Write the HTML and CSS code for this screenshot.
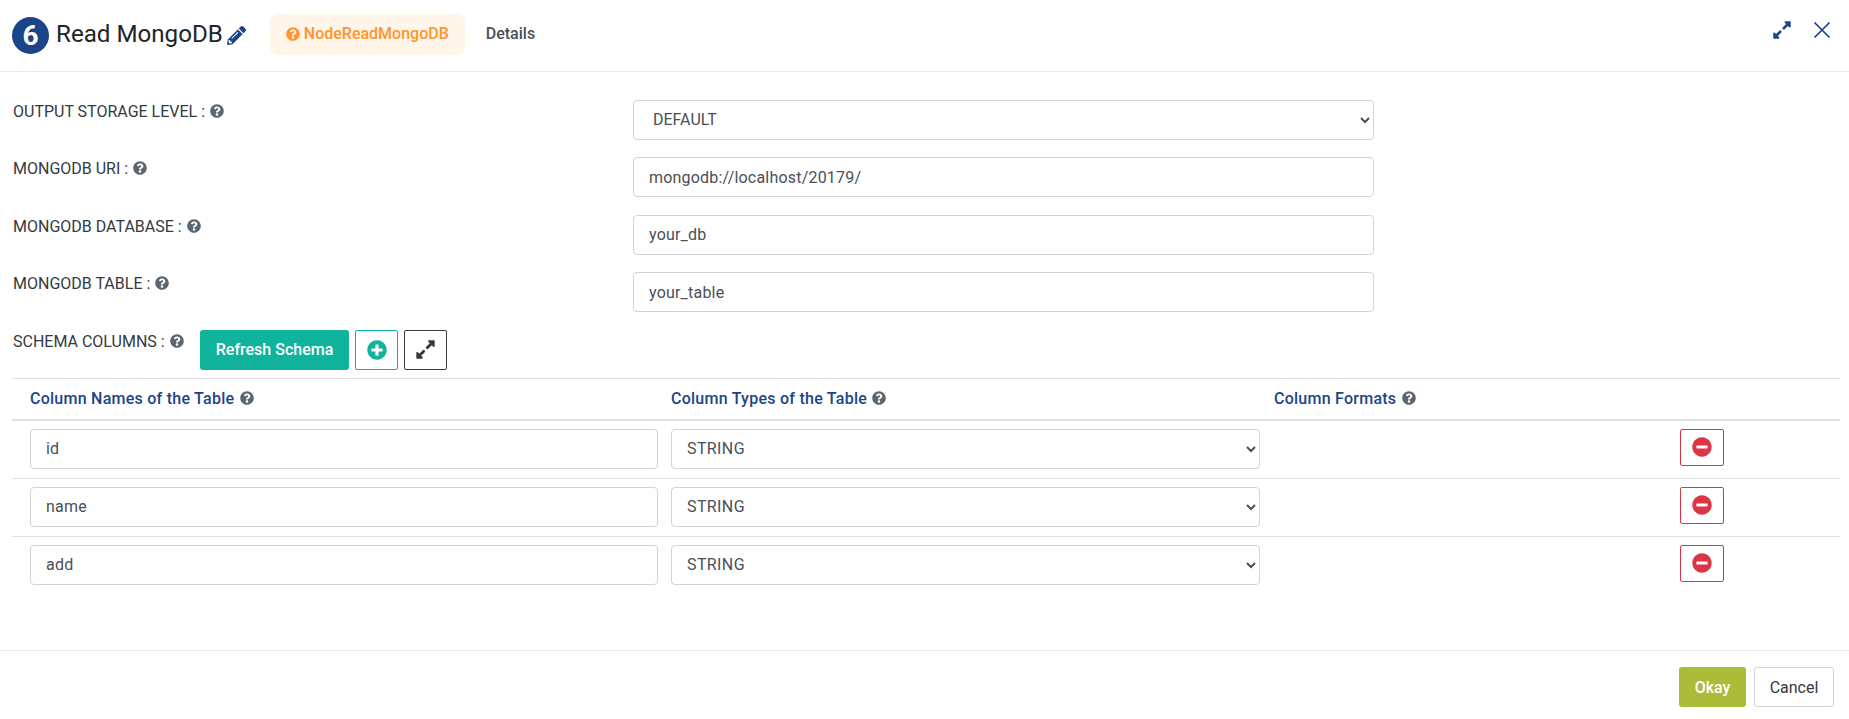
FILE: index.html
```html
<!DOCTYPE html>
<html lang="en">
<head>
<meta charset="utf-8">
<title>Read MongoDB</title>
<link rel="stylesheet" href="styles.css">
</head>
<body>
<svg class="sprite" width="0" height="0" aria-hidden="true">
  <symbol id="q" viewBox="0 0 512 512"><path d="M504 256c0 136.997-111.043 248-248 248S8 392.997 8 256C8 119.083 119.043 8 256 8s248 111.083 248 248zM262.655 90c-54.497 0-89.255 22.957-116.549 63.758-3.536 5.286-2.353 12.415 2.715 16.258l34.699 26.31c5.205 3.947 12.621 3.008 16.665-2.122 17.864-22.658 30.113-35.797 57.303-35.797 20.429 0 45.698 13.148 45.698 32.958 0 14.976-12.363 22.667-32.534 33.976C247.128 238.528 216 254.941 216 296v4c0 6.627 5.373 12 12 12h56c6.627 0 12-5.373 12-12v-1.333c0-28.462 83.186-29.647 83.186-106.667 0-58.002-60.165-102-116.531-102zM256 338c-25.365 0-46 20.635-46 46 0 25.364 20.635 46 46 46s46-20.636 46-46c0-25.365-20.635-46-46-46z"/></symbol>
  <symbol id="plus" viewBox="0 0 512 512"><path d="M256 8C119 8 8 119 8 256s111 248 248 248 248-111 248-248S393 8 256 8zm144 276c0 6.6-5.4 12-12 12h-92v92c0 6.6-5.4 12-12 12h-56c-6.6 0-12-5.4-12-12v-92h-92c-6.6 0-12-5.4-12-12v-56c0-6.6 5.4-12 12-12h92v-92c0-6.6 5.4-12 12-12h56c6.6 0 12 5.4 12 12v92h92c6.6 0 12 5.4 12 12v56z"/></symbol>
  <symbol id="minus" viewBox="0 0 512 512"><path d="M256 8C119 8 8 119 8 256s111 248 248 248 248-111 248-248S393 8 256 8zM124 296c-6.6 0-12-5.4-12-12v-56c0-6.6 5.4-12 12-12h264c6.6 0 12 5.4 12 12v56c0 6.6-5.4 12-12 12H124z"/></symbol>
  <symbol id="pencil" viewBox="0 0 512 512"><path d="M497.9 142.1l-46.1 46.1c-4.7 4.7-12.3 4.7-17 0l-111-111c-4.7-4.7-4.7-12.3 0-17l46.1-46.1c18.7-18.7 49.1-18.7 67.9 0l60.1 60.1c18.8 18.7 18.8 49.1 0 67.9zM284.2 99.8L21.6 362.4.4 483.9c-2.9 16.4 11.4 30.6 27.8 27.8l121.5-21.3 262.6-262.6c4.7-4.7 4.7-12.3 0-17l-111-111c-4.8-4.7-12.4-4.7-17.1 0zM124.1 339.9c-5.5-5.5-5.5-14.3 0-19.8l154-154c5.5-5.5 14.3-5.5 19.8 0s5.5 14.3 0 19.8l-154 154c-5.5 5.5-14.3 5.5-19.8 0zM88 424h48v36.3l-64.5 11.3-31.1-31.1L51.7 376H88v48z"/></symbol>
  <symbol id="expand" viewBox="0 0 448 512"><path d="M212.686 315.314L120 408l32.922 31.029c15.12 15.12 4.412 40.971-16.97 40.971h-112C10.697 480 0 469.255 0 456V344c0-21.382 25.803-32.09 40.922-16.971L72 360l92.686-92.686c6.248-6.248 16.379-6.248 22.627 0l25.373 25.373c6.249 6.248 6.249 16.378 0 22.627zm22.628-118.628L328 104l-32.922-31.029C279.958 57.851 290.666 32 312.048 32h112C437.303 32 448 42.745 448 56v112c0 21.382-25.803 32.09-40.922 16.971L376 152l-92.686 92.686c-6.248 6.248-16.379 6.248-22.627 0l-25.373-25.373c-6.249-6.248-6.249-16.378 0-22.627z"/></symbol>
</svg>

<div class="modal">
  <header class="head">
    <span class="step">6</span>
    <h1 class="title">Read MongoDB</h1>
    <svg class="ico pencil"><use href="#pencil"/></svg>
    <a class="tab tab-active"><svg class="ico q-orange"><use href="#q"/></svg>NodeReadMongoDB</a>
    <a class="tab">Details</a>
    <span class="head-actions">
      <svg class="ico head-expand"><use href="#expand"/></svg>
      <svg class="close" viewBox="0 0 18 18"><path d="M1.5 1.5l15 15M16.5 1.5l-15 15"/></svg>
    </span>
  </header>

  <main class="body">
    <div class="field">
      <label class="label">OUTPUT STORAGE LEVEL : <svg class="ico q"><use href="#q"/></svg></label>
      <select class="control select-main"><option>DEFAULT</option></select>
    </div>
    <div class="field">
      <label class="label">MONGODB URI : <svg class="ico q"><use href="#q"/></svg></label>
      <input class="control" value="mongodb://localhost/20179/">
    </div>
    <div class="field">
      <label class="label">MONGODB DATABASE : <svg class="ico q"><use href="#q"/></svg></label>
      <input class="control" value="your_db">
    </div>
    <div class="field">
      <label class="label">MONGODB TABLE : <svg class="ico q"><use href="#q"/></svg></label>
      <input class="control" value="your_table">
    </div>

    <div class="schema">
      <label class="label">SCHEMA COLUMNS : <svg class="ico q"><use href="#q"/></svg></label>
      <button class="btn btn-teal">Refresh Schema</button>
      <button class="btn-icon btn-icon-teal"><svg class="ico plus"><use href="#plus"/></svg></button>
      <button class="btn-icon btn-icon-dark"><svg class="ico expand"><use href="#expand"/></svg></button>
    </div>

    <div class="table">
      <div class="grid thead">
        <div>Column Names of the Table <svg class="ico q"><use href="#q"/></svg></div>
        <div>Column Types of the Table <svg class="ico q"><use href="#q"/></svg></div>
        <div>Column Formats <svg class="ico q"><use href="#q"/></svg></div>
        <div></div>
      </div>
      <div class="grid trow">
        <input class="control" value="id">
        <select class="control select-cell"><option>STRING</option></select>
        <div></div>
        <button class="btn-icon btn-del"><svg class="ico minus"><use href="#minus"/></svg></button>
      </div>
      <div class="grid trow">
        <input class="control" value="name">
        <select class="control select-cell"><option>STRING</option></select>
        <div></div>
        <button class="btn-icon btn-del"><svg class="ico minus"><use href="#minus"/></svg></button>
      </div>
      <div class="grid trow">
        <input class="control" value="add">
        <select class="control select-cell"><option>STRING</option></select>
        <div></div>
        <button class="btn-icon btn-del"><svg class="ico minus"><use href="#minus"/></svg></button>
      </div>
    </div>
  </main>

  <footer class="foot">
    <button class="btn btn-okay">Okay</button>
    <button class="btn btn-cancel">Cancel</button>
  </footer>
</div>
</body>
</html>
```
FILE: styles.css
```css
* { box-sizing: border-box; }
html, body { margin: 0; height: 100%; background: #fff; }
body { font-family: Roboto, "Liberation Sans", sans-serif; font-size: 16px; color: #343a40; overflow: hidden; }
.sprite { display: block; height: 0; }
.modal { height: 719px; display: flex; flex-direction: column; }
.ico { fill: currentColor; display: inline-block; flex: none; }

.head { height: 72px; display: flex; align-items: center; padding: 0 12px; border-bottom: 1px solid #e9ecef; }
.step { width: 37px; height: 37px; flex: none; border-radius: 50%; background: #1c4587; color: #fff; font-size: 28px; font-weight: 700; display: flex; align-items: center; justify-content: center; margin-top: -1px; }
.title { margin: -4px 0 0 7px; font-size: 24.15px; font-weight: 400; line-height: 36px; color: #212529; }
.pencil { width: 19px; height: 19px; color: #1c4587; margin: -1px 0 0 4px; }
.tab { display: flex; align-items: center; height: 41px; padding: 0 15px 1px; font-weight: 500; font-size: 16px; color: #495057; border-radius: 8px; margin-top: -3px; flex: none; }
.tab-active { margin-left: 24px; padding: 0 16px 1px; background: #fff5e8; color: #fd9530; margin-right: 6px; }
.q-orange { width: 14px; height: 14px; margin-right: 4px; }
.head-actions { margin-left: auto; align-self: flex-start; display: flex; align-items: center; gap: 22px; margin-right: 6px; margin-top: 20px; height: 20px; }
.head-expand { width: 18px; height: 20px; color: #1c4587; }
.close { width: 18px; height: 18px; stroke: #1c4587; stroke-width: 1.7; fill: none; }

.body { flex: 1; padding: 28px 9px 0 12px; }
.field { display: grid; grid-template-columns: 621px 741px; height: 57.4px; }
.label { font-size: 16px; line-height: 21px; color: #343a40; padding: 1px 0 0 1px; }
.q { width: 14px; height: 14px; color: #5c6670; vertical-align: -1px; margin-left: 1px; }
.control { height: 40px; width: 100%; border: 1px solid #ced4da; border-radius: 4px; background: #fff; font: 16px Roboto, "Liberation Sans", sans-serif; letter-spacing: .2px; color: #495057; padding: 0 15px; outline: 0; }
.select-main { padding: 0 15px 2px; letter-spacing: 0; }
.select-cell { padding: 0 11px; letter-spacing: .4px; }

.schema { display: flex; align-items: flex-start; height: 48.4px; }
.schema .label { width: 188px; flex: none; }
.btn { height: 40px; border: 0; border-radius: 3px; font: 500 16px Roboto, "Liberation Sans", sans-serif; cursor: pointer; }
.btn-teal { width: 149px; background: #10b39b; color: #fff; }
.btn-icon { display: flex; align-items: center; justify-content: center; background: #fff; border-radius: 2px; padding: 0; }
.btn-icon-teal { width: 43px; height: 40px; margin-left: 6px; border: 1px solid #10b39b; color: #10b39b; }
.btn-icon-dark { width: 43px; height: 40px; margin-left: 6px; border: 1px solid #343a40; color: #343a40; }
.plus { width: 20px; height: 20px; }
.expand { width: 19px; height: 21px; }

.table { border-top: 1px solid #dee2e6; }
.grid { display: grid; grid-template-columns: 628px 589px 394px 44px; column-gap: 13px; padding-left: 18px; }
.thead { height: 42px; align-items: center; border-bottom: 2px solid #dee2e6; font-weight: 500; letter-spacing: .25px; color: #1c4587; padding-bottom: 1px; }
.thead > div:nth-child(3) { margin-left: 1px; }
.trow { height: 58px; align-items: start; padding-top: 8px; border-bottom: 1px solid #dee2e6; }
.trow:last-child { border-bottom: 0; }
.btn-del { width: 44px; height: 37px; border: 1px solid #dc3545; color: #dc3545; }
.minus { width: 20px; height: 20px; }

.foot { height: 69px; border-top: 1px solid #e9ecef; display: flex; justify-content: flex-end; align-items: flex-start; gap: 8px; padding: 16px 15px 0 0; }
.btn-okay { width: 67px; background: #abbd38; color: #fff; }
.btn-cancel { width: 80px; background: #fff; border: 1px solid #ced4da; color: #343a40; font-weight: 400; }
```
